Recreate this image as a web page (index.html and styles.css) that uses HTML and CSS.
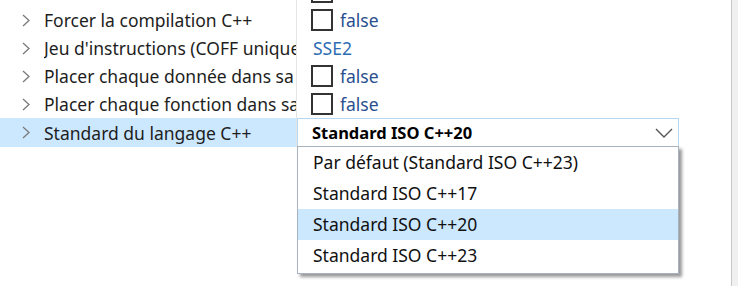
FILE: index.html
```html
<!DOCTYPE html>
<html lang="fr">
<head>
    <meta charset="UTF-8">
    <title>Propriétés C++</title>
    <link rel="stylesheet" href="styles.css">
</head>
<body>
    <div class="panel">
        <div class="grid">
            <div class="row partial">
                <div class="name"></div>
                <div class="value"><span class="check"></span></div>
            </div>
            <div class="row">
                <div class="name">
                    <svg class="expand" width="8" height="13" viewBox="0 0 8 13"><path d="M1 1 L7 6.5 L1 12" fill="none" stroke="#7a7a7a" stroke-width="1.3"/></svg>
                    <span class="label">Forcer la compilation C++</span>
                </div>
                <div class="value"><span class="check"></span><span class="bool">false</span></div>
            </div>
            <div class="row">
                <div class="name">
                    <svg class="expand" width="8" height="13" viewBox="0 0 8 13"><path d="M1 1 L7 6.5 L1 12" fill="none" stroke="#7a7a7a" stroke-width="1.3"/></svg>
                    <span class="label">Jeu d'instructions (COFF uniquement)</span>
                </div>
                <div class="value"><span class="enum">SSE2</span></div>
            </div>
            <div class="row">
                <div class="name">
                    <svg class="expand" width="8" height="13" viewBox="0 0 8 13"><path d="M1 1 L7 6.5 L1 12" fill="none" stroke="#7a7a7a" stroke-width="1.3"/></svg>
                    <span class="label">Placer chaque donnée dans sa section</span>
                </div>
                <div class="value"><span class="check"></span><span class="bool">false</span></div>
            </div>
            <div class="row">
                <div class="name">
                    <svg class="expand" width="8" height="13" viewBox="0 0 8 13"><path d="M1 1 L7 6.5 L1 12" fill="none" stroke="#7a7a7a" stroke-width="1.3"/></svg>
                    <span class="label">Placer chaque fonction dans sa section</span>
                </div>
                <div class="value"><span class="check"></span><span class="bool">false</span></div>
            </div>
            <div class="row selected">
                <div class="name">
                    <svg class="expand" width="8" height="13" viewBox="0 0 8 13"><path d="M1 1 L7 6.5 L1 12" fill="none" stroke="#7a7a7a" stroke-width="1.3"/></svg>
                    <span class="label">Standard du langage C++</span>
                </div>
                <div class="value combo-cell">
                    <div class="combo">
                        <span class="combo-text">Standard ISO C++20</span>
                        <svg class="combo-arrow" width="18" height="10" viewBox="0 0 18 10"><path d="M1 1 L9 9 L17 1" fill="none" stroke="#555" stroke-width="1.4"/></svg>
                    </div>
                    <ul class="dropdown">
                        <li>Par défaut (Standard ISO C++23)</li>
                        <li>Standard ISO C++17</li>
                        <li class="active">Standard ISO C++20</li>
                        <li>Standard ISO C++23</li>
                    </ul>
                </div>
            </div>
            <div class="filler">
                <div class="name"></div>
                <div class="value"></div>
            </div>
        </div>
        <div class="scrollbar"></div>
    </div>
</body>
</html>
```

FILE: styles.css
```css
body {
    margin: 0;
    background: #fff;
    font-family: "Noto Sans", "Open Sans", sans-serif;
    font-size: 17.5px;
    color: #1e1e1e;
}

.panel {
    display: flex;
    width: 738px;
    height: 286px;
    overflow: hidden;
}

.grid {
    flex: 1;
    display: flex;
    flex-direction: column;
    margin-top: 6px;
}

.row {
    display: flex;
    height: 28px;
    flex-shrink: 0;
}

.row.partial {
    margin-top: -28px;
}

.row.selected {
    height: 29px;
}

.name {
    width: 296px;
    flex-shrink: 0;
    display: flex;
    align-items: center;
    border-right: 1px solid #e4e4e4;
    white-space: nowrap;
    overflow: hidden;
}

.selected .name {
    background: #cce8ff;
}

.expand {
    margin-left: 22px;
    margin-right: 14px;
    flex-shrink: 0;
}

.label {
    overflow: hidden;
}

.value {
    flex: 1;
    display: flex;
    align-items: center;
    padding-left: 14px;
}

.check {
    width: 18px;
    height: 18px;
    border: 2px solid #333;
    margin-right: 7px;
}

.bool {
    color: #2a4f8f;
}

.enum {
    color: #2e6db4;
    margin-left: 2px;
}

.filler {
    flex: 1;
    display: flex;
}

.filler .name {
    border-right: none;
}

.combo-cell {
    position: relative;
    padding-left: 0;
    width: 382px;
    flex: none;
}

.combo {
    width: 382px;
    height: 29px;
    box-sizing: border-box;
    border: 1px solid #b6d7f2;
    display: flex;
    align-items: center;
    justify-content: space-between;
    padding: 0 5px 0 14px;
    background: #fff;
}

.combo-text {
    font-weight: bold;
    font-size: 16.5px;
    color: #000;
}

.dropdown {
    position: absolute;
    top: 28px;
    left: 0;
    width: 382px;
    box-sizing: border-box;
    margin: 0;
    padding: 0 0 2px;
    list-style: none;
    background: #fff;
    border: 1px solid #a7b3be;
    box-shadow: 3px 3px 3px rgba(0, 0, 0, 0.4);
}

.dropdown li {
    height: 31px;
    line-height: 31px;
    padding-left: 15px;
    color: #111;
}

.dropdown li.active {
    background: #cce8ff;
}

.scrollbar {
    width: 6px;
    border-left: 1px solid #c8c8c8;
    background: #f0f0f0;
}
```
